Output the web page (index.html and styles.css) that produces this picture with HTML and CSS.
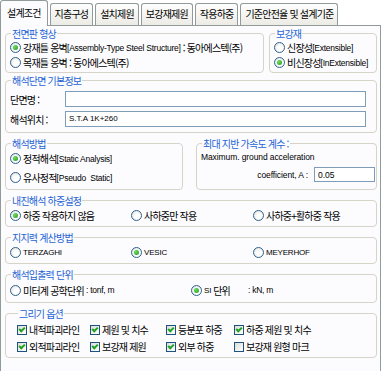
FILE: index.html
```html
<!DOCTYPE html>
<html lang="ko">
<head>
    <meta charset="UTF-8">
    <meta name="viewport" content="width=device-width, initial-scale=1.0">
    <title>설계조건</title>
    <link rel="stylesheet" href="styles.css">
</head>
<body>
    <div class="tabs">
        <div class="tab active">설계조건</div>
        <div class="tab">지층구성</div>
        <div class="tab">설치제원</div>
        <div class="tab">보강재제원</div>
        <div class="tab">작용하중</div>
        <div class="tab">기준안전율 및 설계기준</div>
    </div>

    <div class="panel">
        <div class="row top">
            <fieldset class="box wall">
                <legend>전면판 형상</legend>
                <div class="opt"><span class="radio on"></span>강재틀 옹벽<span class="en">[Assembly-Type Steel Structure]</span>&nbsp;: 동아에스텍(주)</div>
                <div class="opt"><span class="radio"></span>목재틀 옹벽 : 동아에스텍(주)</div>
            </fieldset>
            <fieldset class="box reinf">
                <legend>보강재</legend>
                <div class="opt"><span class="radio"></span>신장성<span class="en">[Extensible]</span></div>
                <div class="opt"><span class="radio on"></span>비신장성<span class="en">[InExtensible]</span></div>
            </fieldset>
        </div>

        <fieldset class="box info">
            <legend>해석단면 기본정보</legend>
            <div class="line">
                <label>단면명 :</label>
                <div class="field"></div>
            </div>
            <div class="line">
                <label>해석위치 :</label>
                <div class="field">S.T.A 1K+260</div>
            </div>
        </fieldset>

        <div class="row mid">
            <fieldset class="box method">
                <legend>해석방법</legend>
                <div class="opt tall"><span class="radio on"></span>정적해석<span class="en">[Static Analysis]</span></div>
                <div class="opt tall"><span class="radio"></span>유사정적<span class="en">[Pseudo&nbsp; Static]</span></div>
            </fieldset>
            <fieldset class="box accel">
                <legend>최대 지반 가속도 계수 :</legend>
                <div class="accel-text">Maximum. ground acceleration</div>
                <div class="accel-row">
                    <span class="accel-label">coefficient, A :</span>
                    <div class="field small">0.05</div>
                </div>
            </fieldset>
        </div>

        <fieldset class="box single">
            <legend>내진해석 하중설정</legend>
            <div class="cols three">
                <div class="opt"><span class="radio on"></span>하중 작용하지 않음</div>
                <div class="opt"><span class="radio"></span>사하중만 작용</div>
                <div class="opt"><span class="radio"></span>사하중+활하중 작용</div>
            </div>
        </fieldset>

        <fieldset class="box single">
            <legend>지지력 계산방법</legend>
            <div class="cols three">
                <div class="opt"><span class="radio"></span><span class="caps">TERZAGHI</span></div>
                <div class="opt"><span class="radio on"></span><span class="caps">VESIC</span></div>
                <div class="opt"><span class="radio"></span><span class="caps">MEYERHOF</span></div>
            </div>
        </fieldset>

        <fieldset class="box single units">
            <legend>해석입출력 단위</legend>
            <div class="cols two">
                <div class="opt"><span class="radio"></span>미터계 공학단위<span class="en">&nbsp;: tonf, m</span></div>
                <div class="opt"><span class="radio on"></span><span class="caps">SI</span>&nbsp;단위<span class="en gap">: kN, m</span></div>
            </div>
        </fieldset>

        <fieldset class="box draw">
            <legend>그리기 옵션</legend>
            <div class="checks">
                <div class="opt"><span class="check on"></span>내적파괴라인</div>
                <div class="opt"><span class="check on"></span>제원 및 치수</div>
                <div class="opt"><span class="check on"></span>등분포 하중</div>
                <div class="opt"><span class="check on"></span>하중 제원 및 치수</div>
                <div class="opt"><span class="check on"></span>외적파괴라인</div>
                <div class="opt"><span class="check on"></span>보강재 제원</div>
                <div class="opt"><span class="check on"></span>외부 하중</div>
                <div class="opt"><span class="check"></span>보강재 원형 마크</div>
            </div>
        </fieldset>
    </div>
</body>
</html>
```

FILE: styles.css
```css
body {
    margin: 0;
    width: 383px;
    height: 371px;
    overflow: hidden;
    background: #ffffff;
    font-family: "Noto Sans CJK KR", "Liberation Sans", sans-serif;
    font-size: 10px;
    letter-spacing: -0.8px;
    color: #000000;
}

/* tab strip */
.tabs {
    display: flex;
    align-items: flex-end;
    height: 25px;
}
.tab {
    box-sizing: border-box;
    height: 22px;
    line-height: 20px;
    padding: 0 4px;
    margin-right: 2px;
    border: 1px solid #919b9c;
    border-bottom: none;
    border-radius: 3px 3px 0 0;
    background: linear-gradient(#fefefe, #ecebe5);
    white-space: nowrap;
}
.tab.active {
    height: 26px;
    line-height: 24px;
    margin-bottom: -1px;
    padding: 0 6px;
    background: #fcfcfe;
    position: relative;
}

.panel {
    box-sizing: border-box;
    width: 381px;
    height: 360px;
    padding: 2px 3px 0 4px;
    border: 1px solid #919b9c;
    background: #fcfcfe;
    display: flex;
    flex-direction: column;
    gap: 5px;
}

.row {
    display: flex;
}
.row.top {
    gap: 5px;
    margin-bottom: -3px;
}
.row.mid {
    gap: 13px;
}

/* group boxes */
.box {
    margin: 0;
    min-width: 0;
    padding: 0 4px;
    border: 1px solid #d6d4c8;
    border-radius: 4px;
}
.box legend {
    margin-left: 1px;
    padding: 0 1px;
    line-height: 11px;
    color: #2563d4;
}

.opt {
    display: flex;
    align-items: center;
    height: 15px;
    white-space: nowrap;
}
.opt.tall {
    height: 19px;
}

.en {
    font-family: "Liberation Sans", sans-serif;
    font-size: 8.5px;
    letter-spacing: -0.25px;
}
.en.gap {
    margin-left: 18px;
}
.caps {
    font-family: "Liberation Sans", sans-serif;
    font-size: 8px;
    letter-spacing: -0.2px;
}

.radio {
    box-sizing: border-box;
    flex: none;
    width: 11px;
    height: 11px;
    margin-right: 2px;
    border: 1px solid #2f6190;
    border-radius: 50%;
    background: radial-gradient(circle at 60% 60%, #ffffff 30%, #dcdcd4);
    display: flex;
    align-items: center;
    justify-content: center;
}
.radio.on::after {
    content: "";
    width: 5px;
    height: 5px;
    border-radius: 50%;
    background: radial-gradient(circle at 35% 35%, #6cdc5c, #1e9a1e);
}

.check {
    box-sizing: border-box;
    flex: none;
    width: 10px;
    height: 10px;
    margin-right: 2px;
    border: 1px solid #1c5180;
    background: linear-gradient(135deg, #dcdcd6, #ffffff);
    display: flex;
    align-items: center;
    justify-content: center;
}
.check.on::after {
    content: "";
    width: 2px;
    height: 4px;
    margin-top: -2px;
    border: solid #21a121;
    border-width: 0 2px 2px 0;
    transform: rotate(45deg);
}

.wall {
    width: 259px;
    box-sizing: border-box;
    padding-top: 1px;
    padding-bottom: 2px;
}
.reinf {
    flex: 1;
    padding-top: 1px;
    padding-bottom: 2px;
}

/* text fields */
.info {
    padding: 5px 10px 5px 4px;
    display: flex;
    flex-direction: column;
    gap: 4px;
}
.line {
    display: flex;
    align-items: center;
}
.line label {
    width: 55px;
    flex: none;
}
.field {
    box-sizing: border-box;
    height: 16px;
    flex: 1;
    padding-left: 3px;
    border: 1px solid #7f9db9;
    background: #ffffff;
    font-family: "Liberation Sans", sans-serif;
    font-size: 8px;
    letter-spacing: 0;
    line-height: 14px;
}
.field.small {
    flex: none;
    width: 61px;
    height: 15px;
    font-size: 8.5px;
}

.method {
    width: 178px;
    box-sizing: border-box;
    padding-bottom: 2px;
}
.accel {
    flex: 1;
    padding: 0 1px 5px 4px;
}
.accel-text {
    height: 16px;
    line-height: 16px;
    font-family: "Liberation Sans", sans-serif;
    font-size: 8.5px;
    letter-spacing: -0.1px;
}
.accel-row {
    height: 19px;
    display: flex;
    align-items: center;
    justify-content: flex-end;
    gap: 6px;
}
.accel-label {
    font-family: "Liberation Sans", sans-serif;
    font-size: 8.5px;
    letter-spacing: -0.1px;
}

.single {
    padding-top: 1px;
    padding-bottom: 3px;
}
.single .opt {
    height: 16px;
}
.units {
    padding-top: 2px;
    padding-bottom: 4px;
}
.cols {
    display: grid;
}
.cols.three {
    grid-template-columns: 121px 122px auto;
}
.cols.two {
    grid-template-columns: 181px auto;
}

.draw {
    padding: 2px 4px 2px 11px;
}
.checks {
    display: grid;
    grid-template-columns: 73px 76px 68px auto;
}
.checks .opt {
    height: 17px;
}
```
